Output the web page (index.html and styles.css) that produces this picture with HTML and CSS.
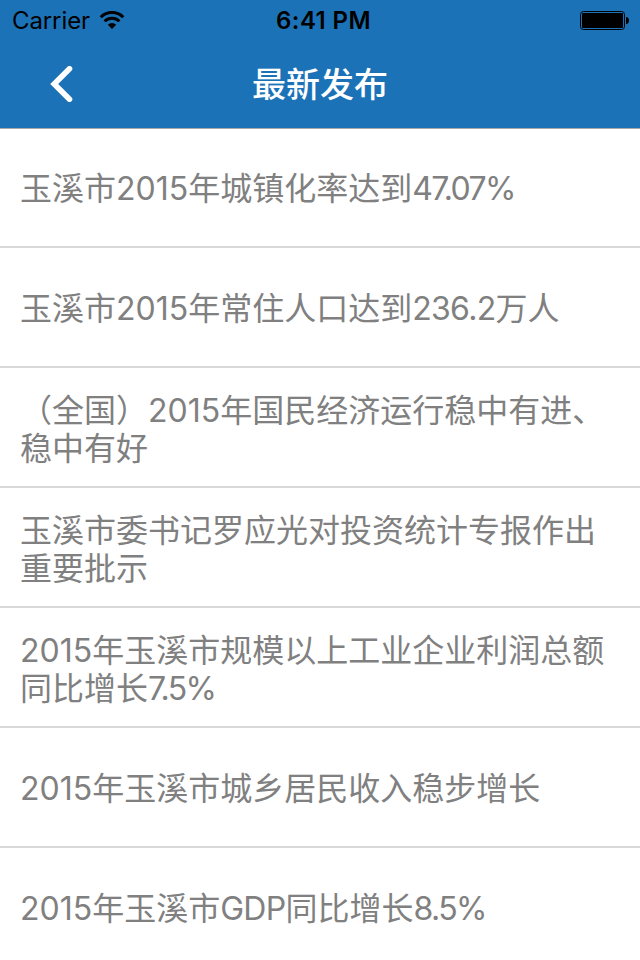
FILE: index.html
```html
<!DOCTYPE html>
<html lang="zh-CN">
<head>
<meta charset="utf-8">
<title>最新发布</title>
<link rel="stylesheet" href="styles.css">
</head>
<body>

<div class="header">
    <div class="status">
        <div class="carrier">
            <span>Carrier</span>
            <svg class="wifi" width="26" height="18" viewBox="0 0 26 18">
                <path d="M1.700 6.200a16 16 0 0 1 22.600 0M5.600 10.200a10.500 10.500 0 0 1 14.800 0" fill="none" stroke="#000" stroke-width="3"/>
                <path d="M13 18l-4.200-4.300a6 6 0 0 1 8.400 0z"/>
            </svg>
        </div>
        <div class="time">6:41 PM</div>
        <div class="battery">
            <svg width="50" height="19" viewBox="0 0 50 19">
                <rect x=".5" y=".5" width="44" height="18" rx="3" fill="none" stroke="#000"/>
                <rect x="2" y="2" width="41" height="15" rx="1"/>
                <path d="M46 6c4 0 4 7 0 7z"/>
            </svg>
        </div>
    </div>
    <div class="navbar">
        <a class="back" href="#">
            <svg width="24" height="36" viewBox="0 0 24 36">
                <path d="M19.500 2.800L4.200 18l15.300 15.200" fill="none" stroke="#fff" stroke-width="5.600" stroke-linecap="round"/>
            </svg>
        </a>
        <h1 class="title">最新发布</h1>
    </div>
</div>

<ul class="list">
    <li>玉溪市2015年城镇化率达到<span class="percent">47.07%</span></li>
    <li>玉溪市2015年常住人口达到<span class="num">236.2</span>万人</li>
    <li class="two">（全国）2015年国民经济运行稳中有进、<br>稳中有好</li>
    <li class="two">玉溪市委书记罗应光对投资统计专报作出<br>重要批示</li>
    <li class="two">2015年玉溪市规模以上工业企业利润总额<br>同比增长<span class="percent">7.5%</span></li>
    <li>2015年玉溪市城乡居民收入稳步增长</li>
    <li>2015年玉溪市<span class="num">GDP</span>同比增长<span class="percent">8.5%</span></li>
</ul>

</body>
</html>
```
FILE: styles.css
```css
* {
    box-sizing: border-box;
}

body {
    margin: 0;
    background: #fff;
    font-family: Inter, "Noto Sans CJK SC", sans-serif;
}

.header {
    height: 129px;
    background: #1c72b7;
    border-bottom: 1px solid #a8a8a8;
}

.status {
    display: grid;
    grid-template-columns: 1fr auto 1fr;
    align-items: center;
    height: 40px;
    padding: 0 10px 0 12px;
    font-size: 24px;
}

.carrier {
    display: flex;
    align-items: center;
    gap: 9px;
    letter-spacing: -0.1px;
}

.time {
    padding-left: 5px;
    font-weight: 600;
    letter-spacing: 0.4px;
}

.battery {
    display: flex;
    justify-content: flex-end;
}

.navbar {
    display: grid;
    grid-template-columns: 100px 1fr 100px;
    align-items: center;
    height: 88px;
}

.back {
    display: flex;
    padding-left: 50px;
}

.title {
    margin: 0;
    padding-bottom: 3px;
    font-size: 34px;
    font-weight: 500;
    color: #fff;
    text-align: center;
}

.list {
    margin: 0;
    padding: 0;
    list-style: none;
}

.list li {
    height: 120px;
    padding: 42px 20px 0;
    border-bottom: 2px solid #d9d9d9;
    font-size: 32px;
    line-height: 38px;
    color: #808080;
    white-space: nowrap;
}

.list li:first-child {
    height: 119px;
    padding-top: 41px;
}

.list li.two {
    padding-top: 24px;
}

.list li:last-child {
    height: 112px;
    border-bottom: 0;
}

/* figures are set a little tighter than the text round them */
.num {
    letter-spacing: -0.7px;
}

.percent {
    letter-spacing: -1.6px;
}
```
